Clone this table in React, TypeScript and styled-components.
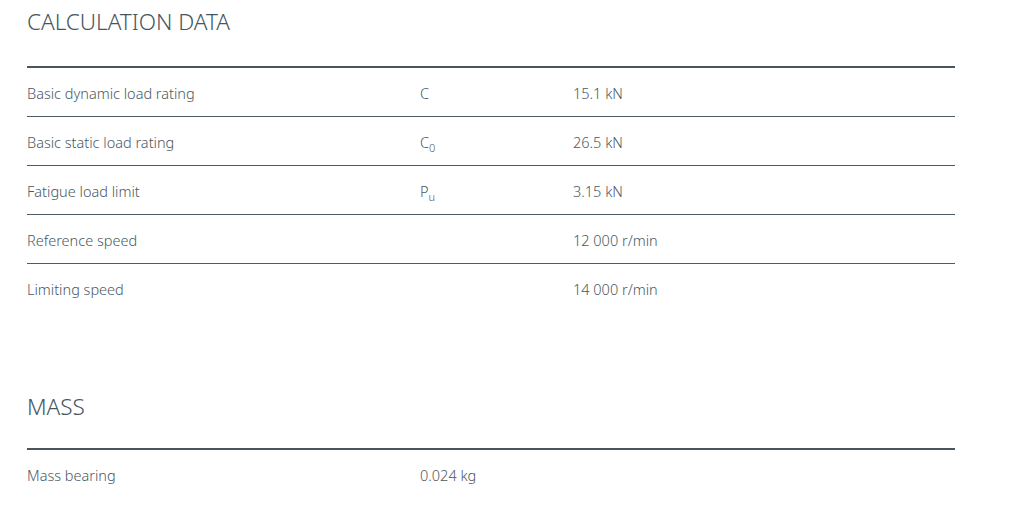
import React from "react";
import styled, { createGlobalStyle } from "styled-components";

const Global = createGlobalStyle`
  html, body { margin: 0; padding: 0; background: #fff; }
  body { font-family: "Noto Sans", "Open Sans", sans-serif; color: #4a5962; }
`;

const Page = styled.div`
  padding: 0 56px 0 27px;
  width: 928px;
`;

const Section = styled.section<{ $gap: number }>`
  margin-top: ${(p) => p.$gap}px;
`;

const Title = styled.h2<{ $h: number }>`
  margin: 0;
  padding-top: 9px;
  height: ${(p) => p.$h}px;
  box-sizing: border-box;
  font-size: 22.5px;
  font-weight: 300;
  line-height: 26px;
  color: #465660;
  border-bottom: 2px solid #46555e;
`;

const Row = styled.div<{ $last?: boolean }>`
  display: grid;
  grid-template-columns: 393px 153px 1fr;
  height: 49px;
  box-sizing: border-box;
  align-items: center;
  padding-top: 1px;
  font-size: 14.5px;
  font-weight: 300;
  border-bottom: ${(p) => (p.$last ? "none" : "1px solid #4e5b64")};
`;

const Cell = styled.span`
  white-space: nowrap;
`;

const Sub = styled.sub`
  font-size: 11px;
  vertical-align: -4px;
  line-height: 0;
`;

type R = { label: string; sym?: React.ReactNode; value: string };

const calc: R[] = [
  { label: "Basic dynamic load rating", sym: "C", value: "15.1 kN" },
  { label: "Basic static load rating", sym: <>C<Sub>0</Sub></>, value: "26.5 kN" },
  { label: "Fatigue load limit", sym: <>P<Sub>u</Sub></>, value: "3.15 kN" },
  { label: "Reference speed", value: "12 000 r/min" },
  { label: "Limiting speed", value: "14 000 r/min" },
];

export default function App() {
  return (
    <Page>
      <Global />
      <Section $gap={0}>
        <Title $h={68}>CALCULATION DATA</Title>
        {calc.map((r, i) => (
          <Row key={r.label} $last={i === calc.length - 1}>
            <Cell>{r.label}</Cell>
            <Cell>{r.sym}</Cell>
            <Cell>{r.value}</Cell>
          </Row>
        ))}
      </Section>
      <Section $gap={72}>
        <Title $h={65}>MASS</Title>
        <Row $last>
          <Cell>Mass bearing</Cell>
          <Cell>0.024 kg</Cell>
        </Row>
      </Section>
    </Page>
  );
}
